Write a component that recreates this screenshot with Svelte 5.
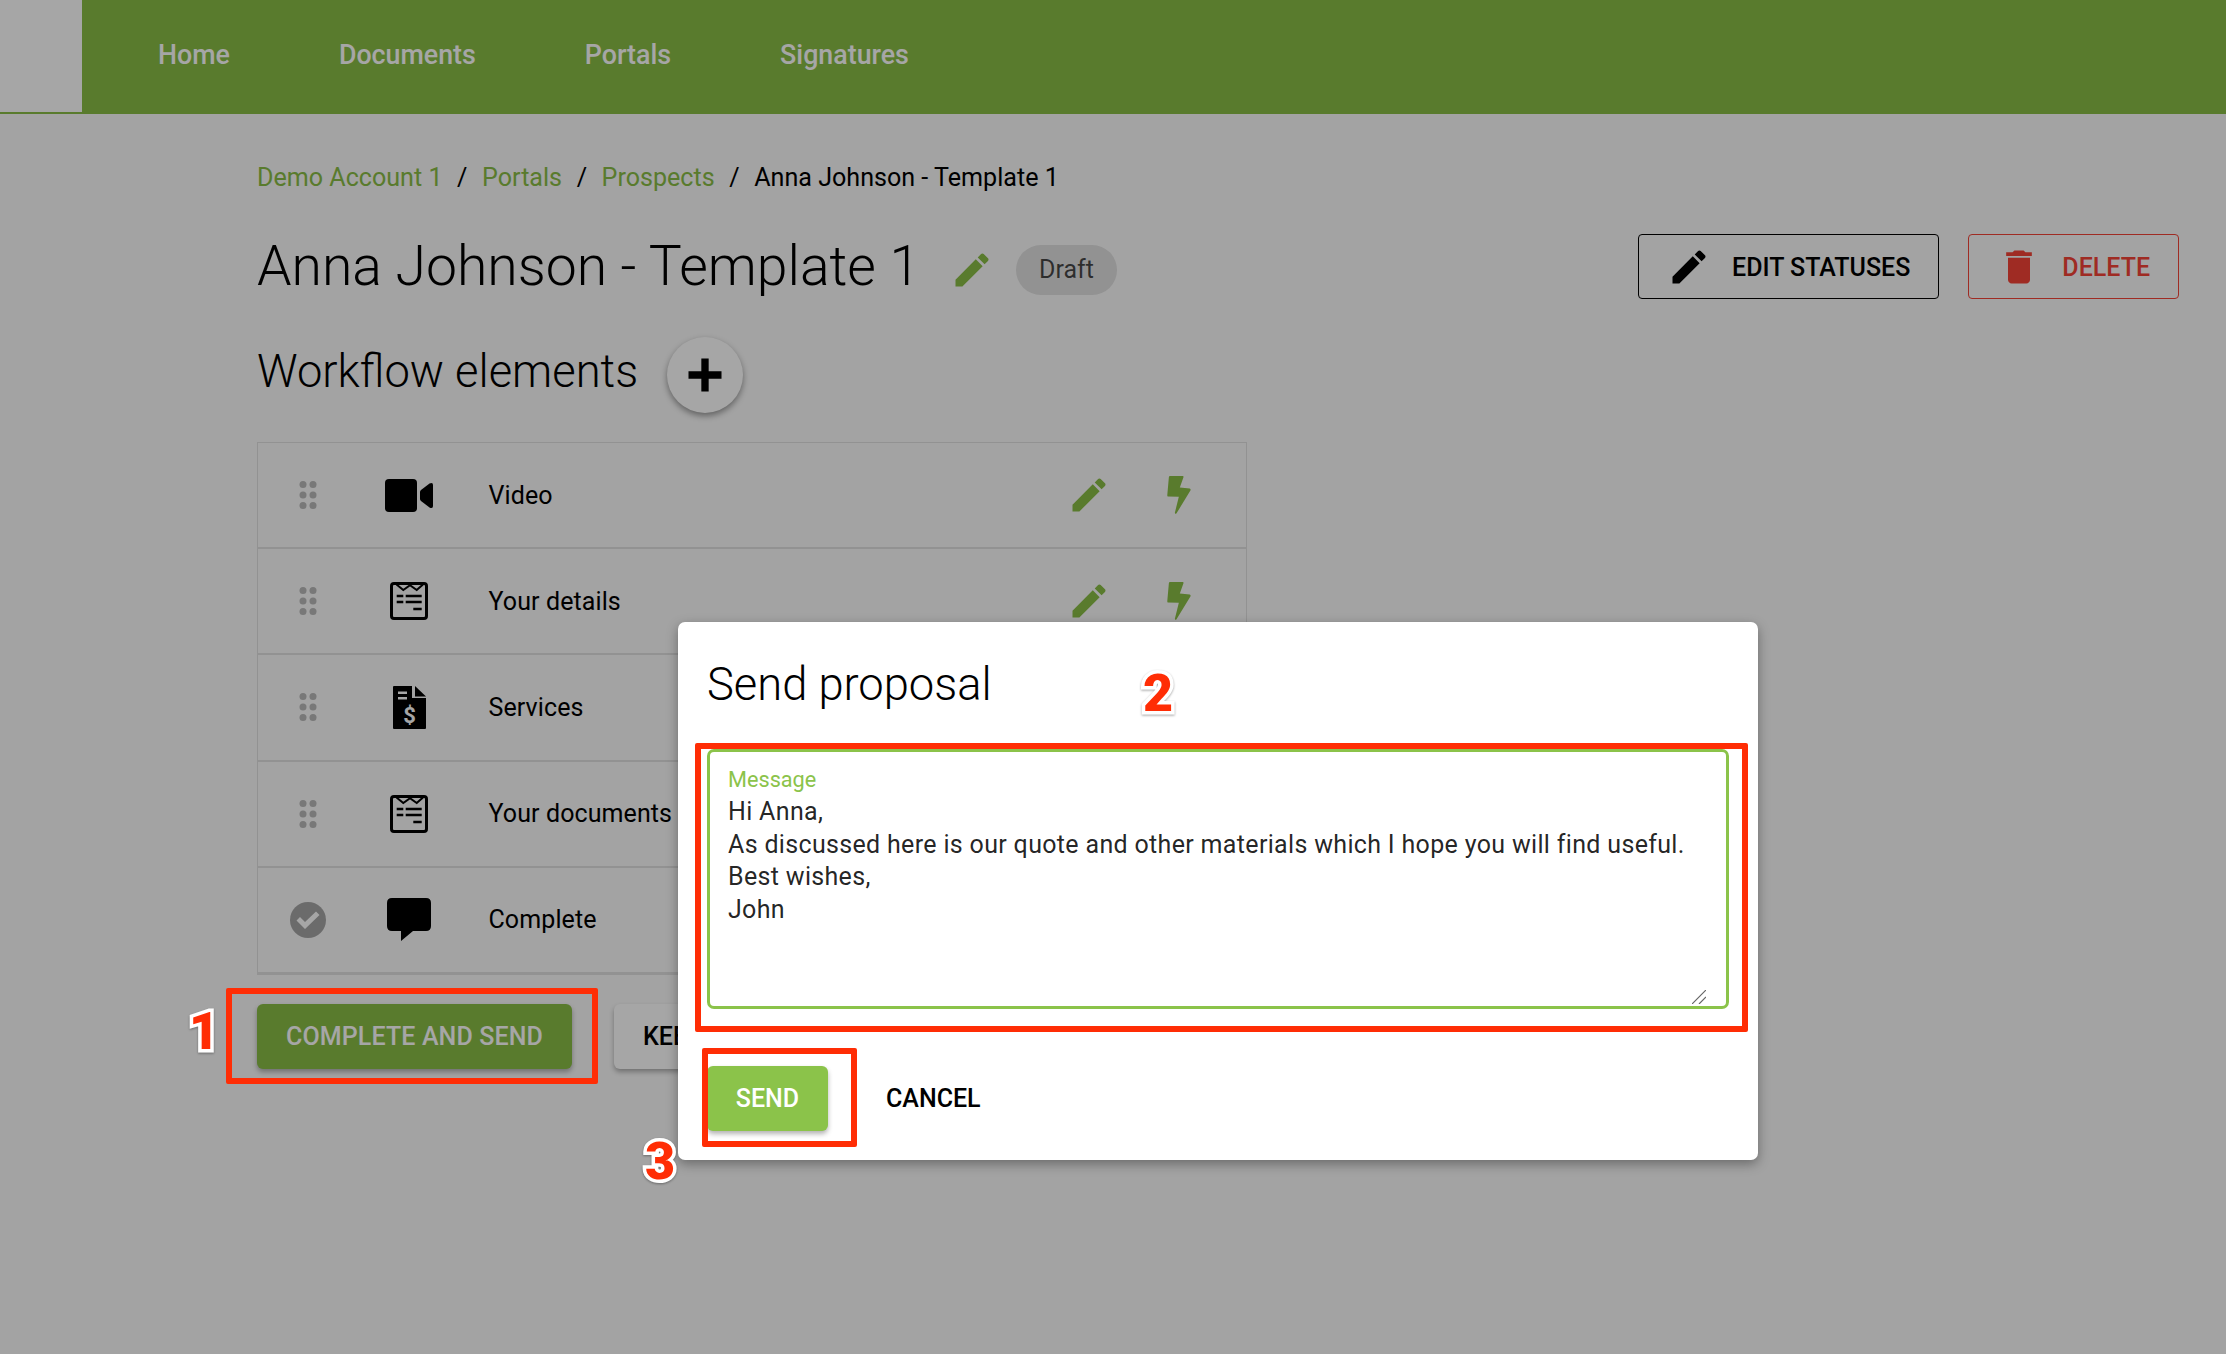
<script>
  const nav = ['Home', 'Documents', 'Portals', 'Signatures'];
  const crumbs = ['Demo Account 1', 'Portals', 'Prospects'];
  const rows = [
    { label: 'Video', icon: 'video' },
    { label: 'Your details', icon: 'form' },
    { label: 'Services', icon: 'invoice' },
    { label: 'Your documents', icon: 'form' },
    { label: 'Complete', icon: 'chat', done: true }
  ];
  const pencil = 'M3 17.25V21h3.75L17.81 9.94l-3.75-3.75L3 17.25zM20.71 7.04c.39-.39.39-1.02 0-1.41l-2.34-2.34c-.39-.39-1.02-.39-1.41 0l-1.83 1.83 3.75 3.75 1.83-1.83z';
  const trash = 'M6 19c0 1.1.9 2 2 2h8c1.1 0 2-.9 2-2V7H6v12zM19 4h-3.5l-1-1h-5l-1 1H5v2h14V4z';
  const message = `Hi Anna,
As discussed here is our quote and other materials which I hope you will find useful.
Best wishes,
John`;
</script>

<div class="page">
  <header class="topbar">
    <div class="logo"></div>
    <nav class="nav">
      {#each nav as item}
        <span class="nav-item">{item}</span>
      {/each}
    </nav>
  </header>

  <main class="main">
    <div class="crumbs">
      {#each crumbs as c}
        <span class="crumb-link">{c}</span>
        <span class="crumb-sep">/</span>
      {/each}
      <span>Anna Johnson - Template 1</span>
    </div>

    <div class="title-row">
      <h1 class="title">Anna Johnson - Template 1</h1>
      <svg class="title-edit" viewBox="0 0 24 24"><path d={pencil} /></svg>
      <span class="chip">Draft</span>
      <div class="actions">
        <button class="outline">
          <svg class="btn-icon" viewBox="0 0 24 24"><path d={pencil} /></svg>
          EDIT STATUSES
        </button>
        <button class="outline danger">
          <svg class="btn-icon" viewBox="0 0 24 24"><path d={trash} /></svg>
          DELETE
        </button>
      </div>
    </div>

    <div class="section-row">
      <h2 class="section">Workflow elements</h2>
      <button class="fab" aria-label="Add">
        <svg viewBox="0 0 24 24"><path d="M10 3h4v7h7v4h-7v7h-4v-7H3v-4h7z" /></svg>
      </button>
    </div>

    <div class="list">
      {#each rows as row}
        <div class="row">
          <div class="cell">
            {#if row.done}
              <svg class="done" viewBox="0 0 36 36">
                <circle cx="18" cy="18" r="18" />
                <path d="M6.5 18.5l3.5-3.5 5 5 11-10.5 3.5 3.5-14.5 14z" />
              </svg>
            {:else}
              <svg class="grip" viewBox="0 0 18 28">
                <circle cx="4" cy="3.5" r="3.5" /><circle cx="14" cy="3.5" r="3.5" />
                <circle cx="4" cy="14" r="3.5" /><circle cx="14" cy="14" r="3.5" />
                <circle cx="4" cy="24.5" r="3.5" /><circle cx="14" cy="24.5" r="3.5" />
              </svg>
            {/if}
          </div>
          <div class="cell">
            {#if row.icon === 'video'}
              <svg class="ic-video" viewBox="0 0 48 33">
                <rect width="32" height="33" rx="4" />
                <path d="M36 11l8.500-6.500Q48 3 48 6v21q0 3-3.500 1.500L36 22q-1-1-1-2v-7q0-1 1-2z" />
              </svg>
            {:else if row.icon === 'form'}
              <svg class="ic-form" viewBox="0 0 38 38">
                <rect x="1.500" y="1.500" width="35" height="35" rx="2.500" class="line" stroke-width="3" />
                <path d="M6.500 2.500L13.300 8 20 3.200 26.700 8 33 2.500" class="line" stroke-width="2" />
                <path d="M6.700 14h6.600M15.700 14h16M6.700 20h6.600M15.700 20h16M23.300 27h8.400" class="line" stroke-width="2.500" />
              </svg>
            {:else if row.icon === 'invoice'}
              <svg class="ic-invoice" viewBox="0 0 33 43">
                <path d="M0 1q0-1 1-1h18v12h14v30q0 1-1 1H1q-1 0-1-1z" />
                <path d="M22 0l11 10.500H22z" />
                <rect x="5" y="5.500" width="9" height="2.500" class="cut" />
                <rect x="5" y="11" width="9" height="2.500" class="cut" />
                <text x="16.500" y="37" class="dollar" text-anchor="middle">$</text>
              </svg>
            {:else}
              <svg class="ic-chat" viewBox="0 0 44 43">
                <path d="M5 0h34q5 0 5 5v23q0 5-5 5H26L14 43V33H5q-5 0-5-5V5q0-5 5-5z" />
              </svg>
            {/if}
          </div>
          <div class="label">{row.label}</div>
          {#if !row.done}
            <div class="cell">
              <svg class="row-edit" viewBox="0 0 24 24"><path d={pencil} /></svg>
            </div>
            <div class="cell">
              <svg class="bolt" viewBox="0 0 71 115">
                <path d="M5 2q1-2 3-2h39q3 0 2 4L38 35l30 3q4 2 2 6L28 113q-4 4-5-2l12-48-33-1q-2 0-2-4z" />
              </svg>
            </div>
          {/if}
        </div>
      {/each}
    </div>

    <div class="footer-btns">
      <button class="raised primary">COMPLETE AND SEND</button>
      <button class="raised">KEEP EDITING</button>
    </div>
  </main>

  <div class="scrim"></div>

  <div class="dialog">
    <h3 class="dialog-title">Send proposal</h3>
    <div class="field">
      <span class="field-label">Message</span>
      <textarea class="field-input" value={message}></textarea>
      <svg class="grip-lines" viewBox="0 0 14 14"><path d="M0 14L14 0M7 14l7-7" /></svg>
    </div>
    <div class="dialog-btns">
      <button class="raised send">SEND</button>
      <button class="text-btn">CANCEL</button>
    </div>
  </div>

  <!-- red callouts drawn over the shot -->
  <div class="callout c1"></div>
  <div class="callout c2"></div>
  <div class="callout c3"></div>
  <span class="num n1">1</span>
  <span class="num n2">2</span>
  <span class="num n3">3</span>
</div>

<style>
  :global(body) {
    margin: 0;
    background: #fafafa;
  }

  .page {
    --brand: #89bd46;
    position: relative;
    min-height: 1354px;
    overflow: hidden;
    font-family: Roboto, "Liberation Sans", sans-serif;
    color: #000;
  }

  button {
    font-family: inherit;
    font-size: 25px;
    font-weight: 500;
    cursor: pointer;
  }

  .topbar {
    display: flex;
    height: 112px;
    background: #fff;
    border-bottom: 2px solid var(--brand);
  }

  .logo {
    width: 82px;
  }

  .nav {
    flex: 1;
    display: flex;
    align-items: center;
    gap: 109px;
    padding: 0 0 2px 76px;
    background: var(--brand);
  }

  .nav-item {
    color: #fff;
    font-size: 26.800px;
    font-weight: 500;
  }

  .main {
    padding: 48px 47px 0 257px;
  }

  .crumbs {
    display: flex;
    align-items: center;
    gap: 14.600px;
    height: 30px;
    font-size: 25.100px;
    margin-bottom: 42px;
  }

  .crumb-link {
    color: var(--brand);
  }

  .title-row {
    display: flex;
    align-items: center;
    height: 65px;
  }

  .title {
    margin: 0;
    font-size: 55.300px;
    font-weight: 300;
  }

  .title-edit {
    width: 44px;
    height: 44px;
    margin: 6px 0 0 30px;
    fill: var(--brand);
  }

  .chip {
    display: flex;
    align-items: center;
    height: 50px;
    margin: 6px 0 0 22px;
    padding: 0 23px;
    border-radius: 25px;
    background: #e0e0e0;
    font-size: 25px;
    color: rgba(0, 0, 0, 0.7);
  }

  .actions {
    display: flex;
    gap: 29px;
    margin-left: auto;
  }

  .outline {
    display: flex;
    align-items: center;
    gap: 21px;
    height: 65px;
    padding: 1px 28px 0;
    background: transparent;
    border: 1px solid #000;
    border-radius: 4px;
    color: #000;
  }

  .outline.danger {
    border-color: #f44336;
    color: #f44336;
  }

  .btn-icon {
    width: 44px;
    height: 44px;
    fill: currentColor;
  }

  .section-row {
    display: flex;
    align-items: center;
    gap: 29px;
    margin-top: 38px;
  }

  .section {
    margin: 0;
    padding-bottom: 7px;
    font-size: 45.300px;
    font-weight: 300;
  }

  .fab {
    display: flex;
    align-items: center;
    justify-content: center;
    width: 76px;
    height: 76px;
    padding: 0;
    border: 0;
    border-radius: 50%;
    background: #fff;
    box-shadow: 0 3px 6px rgba(0, 0, 0, 0.4);
  }

  .fab svg {
    width: 44px;
    height: 44px;
  }

  .list {
    width: 990px;
    margin-top: 29px;
    box-sizing: border-box;
    border: 1px solid #e0e0e0;
  }

  .row {
    display: grid;
    grid-template-columns: 100px 102px 584px 90px 90px;
    align-items: center;
    height: 106.200px;
    box-sizing: border-box;
    border-bottom: 2px solid #e0e0e0;
  }

  .cell {
    display: flex;
    justify-content: center;
    align-items: center;
  }

  .label {
    padding-left: 28.500px;
    font-size: 25px;
    letter-spacing: 0.1px;
  }

  .grip {
    width: 18px;
    height: 28px;
    fill: #b8b8b8;
  }

  .done {
    width: 36px;
    height: 36px;
    fill: #a5a5a5;
  }

  .done path {
    fill: #fff;
  }

  .ic-video {
    width: 48px;
    height: 33px;
  }

  .ic-form {
    width: 38px;
    height: 38px;
  }

  .ic-invoice {
    width: 33px;
    height: 43px;
  }

  .ic-chat {
    width: 44px;
    height: 43px;
  }

  .line {
    fill: none;
    stroke: #000;
  }

  .cut {
    fill: #fff;
  }

  .dollar {
    fill: #fff;
    font-size: 22px;
    font-weight: 700;
  }

  .row-edit {
    width: 44px;
    height: 44px;
    fill: var(--brand);
  }

  .bolt {
    width: 24px;
    height: 38px;
    fill: var(--brand);
  }

  .footer-btns {
    display: flex;
    gap: 42px;
    margin-top: 29px;
  }

  .raised {
    height: 65px;
    padding: 0 29px;
    border: 0;
    border-radius: 6px;
    background: #fff;
    color: #000;
    box-shadow: 0 3px 5px rgba(0, 0, 0, 0.3);
  }

  .raised.primary {
    background: var(--brand);
    color: #fff;
    letter-spacing: 0.12px;
  }

  .scrim {
    position: absolute;
    inset: 0;
    background: rgba(0, 0, 0, 0.35);
  }

  .dialog {
    position: absolute;
    left: 678px;
    top: 622px;
    width: 1080px;
    height: 538px;
    box-sizing: border-box;
    padding: 0 29px;
    background: #fff;
    border-radius: 7px;
    box-shadow: 0 4px 12px rgba(0, 0, 0, 0.35);
  }

  .dialog-title {
    margin: 0;
    height: 127px;
    padding-top: 33px;
    box-sizing: border-box;
    font-size: 45.300px;
    line-height: 60px;
    font-weight: 300;
  }

  .field {
    position: relative;
    box-sizing: border-box;
    height: 260px;
    padding: 44px 20px 2px 18px;
    border: 3px solid #8bc34a;
    border-radius: 7px;
  }

  .field-label {
    position: absolute;
    left: 18px;
    top: 15px;
    font-size: 21.700px;
    line-height: 26px;
    color: #8bc34a;
  }

  .field-input {
    display: block;
    width: 100%;
    height: 208px;
    box-sizing: border-box;
    padding: 0;
    border: 0;
    outline: 0;
    resize: none;
    font-family: inherit;
    font-size: 25px;
    line-height: 32.500px;
    letter-spacing: 0.33px;
    color: rgba(0, 0, 0, 0.87);
  }

  .grip-lines {
    position: absolute;
    right: 20px;
    bottom: 2px;
    width: 14px;
    height: 14px;
    fill: none;
    stroke: #666;
    stroke-width: 1.200;
  }

  .dialog-btns {
    display: flex;
    align-items: center;
    gap: 19px;
    margin-top: 57px;
  }

  .raised.send {
    background: #8bc34a;
    color: #fff;
    width: 121px;
    padding: 0;
  }

  .text-btn {
    height: 65px;
    padding: 0 39px;
    border: 0;
    background: transparent;
    color: #000;
  }

  .callout {
    position: absolute;
    box-sizing: border-box;
    border: 6px solid #ff2d05;
    border-radius: 2px;
  }

  .c1 {
    left: 226px;
    top: 988px;
    width: 372px;
    height: 96px;
  }

  .c2 {
    left: 695px;
    top: 743px;
    width: 1053px;
    height: 289px;
  }

  .c3 {
    left: 702px;
    top: 1048px;
    width: 155px;
    height: 99px;
  }

  .num {
    position: absolute;
    width: 40px;
    text-align: center;
    font-family: Roboto, "Liberation Sans", sans-serif;
    font-size: 52px;
    line-height: 50px;
    font-weight: 900;
    color: #ff2d05;
    -webkit-text-stroke: 7px #fff;
    paint-order: stroke fill;
    filter: drop-shadow(0 1px 1px rgba(0, 0, 0, 0.35));
  }

  .n1 {
    left: 184px;
    top: 1007px;
  }

  .n2 {
    left: 1138px;
    top: 669px;
  }

  .n3 {
    left: 640px;
    top: 1137px;
  }
</style>
